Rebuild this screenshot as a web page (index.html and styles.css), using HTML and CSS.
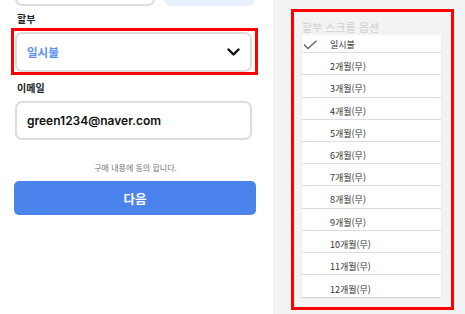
FILE: index.html
```html
<!DOCTYPE html>
<html lang="ko">
<head>
  <meta charset="UTF-8">
  <title>할부 선택</title>
  <link rel="stylesheet" href="styles.css">
</head>
<body>
  <div class="page">
    <section class="form">
      <div class="top-row">
        <div class="field-stub"></div>
        <div class="chip-stub"></div>
      </div>

      <div class="label">할부</div>
      <div class="highlight select-mark">
        <div class="select">
          <span class="select-value">일시불</span>
          <svg class="chevron" width="13" height="8" viewBox="0 0 13 8">
            <polyline points="1.5,1.5 6.5,6.5 11.5,1.5" fill="none" stroke="#111" stroke-width="2.4" stroke-linecap="round" stroke-linejoin="round"/>
          </svg>
        </div>
      </div>

      <div class="label">이메일</div>
      <div class="input">green1234@naver.com</div>

      <p class="agree">구매 내용에 동의 합니다.</p>
      <button class="next">다음</button>
    </section>

    <aside class="side">
      <div class="highlight picker-box">
        <div class="picker-title">할부 스크롤 옵션</div>
        <ul class="picker">
          <li class="selected">
            <span class="check">
              <svg width="15" height="10" viewBox="0 0 15 10">
                <polyline points="1,4.5 5,8.5 13.5,0.8" fill="none" stroke="#666" stroke-width="1.4"/>
              </svg>
            </span>일시불
          </li>
          <li><span class="check"></span>2개월(무)</li>
          <li><span class="check"></span>3개월(무)</li>
          <li><span class="check"></span>4개월(무)</li>
          <li><span class="check"></span>5개월(무)</li>
          <li><span class="check"></span>6개월(무)</li>
          <li><span class="check"></span>7개월(무)</li>
          <li><span class="check"></span>8개월(무)</li>
          <li><span class="check"></span>9개월(무)</li>
          <li><span class="check"></span>10개월(무)</li>
          <li><span class="check"></span>11개월(무)</li>
          <li><span class="check"></span>12개월(무)</li>
        </ul>
      </div>
    </aside>
  </div>
</body>
</html>
```

FILE: styles.css
```css
* {
  box-sizing: border-box;
}

body {
  margin: 0;
  font-family: 'Inter', 'Noto Sans CJK KR', sans-serif;
  background-color: #ffffff;
  overflow: hidden;
}

.page {
  display: flex;
  width: 465px;
  height: 314px;
}

/* left form column */
.form {
  width: 273px;
  padding-left: 15px;
  background-color: #ffffff;
}

.top-row {
  display: flex;
  gap: 9px;
  height: 40px;
  margin-top: -34px;
}

.field-stub {
  width: 140px;
  border: 2px solid #dddddd;
  border-radius: 7px;
}

.chip-stub {
  width: 91px;
  background-color: #e9f0fd;
  border-radius: 7px;
}

.label {
  margin: 6px 0 2px 2px;
  font-family: 'Noto Sans CJK KR', sans-serif;
  font-size: 10px;
  font-weight: 700;
  line-height: 14px;
  color: #222222;
}

.highlight {
  border: 3px solid #ff0000;
}

.select-mark {
  width: 247px;
  margin-left: -4px;
  padding: 1px 0 0 1px;
}

.select {
  display: flex;
  align-items: center;
  justify-content: space-between;
  width: 237px;
  height: 40px;
  padding: 0 10px 0 10px;
  border: 2px solid #dddddd;
  border-radius: 7px;
}

.select-value {
  font-family: 'Noto Sans CJK KR', sans-serif;
  font-size: 11.5px;
  font-weight: 700;
  color: #5a8ef0;
}

.input {
  display: flex;
  align-items: center;
  width: 237px;
  height: 39px;
  margin-top: 6px;
  padding-left: 10px;
  border: 2px solid #dddddd;
  border-radius: 7px;
  font-size: 12px;
  font-weight: 600;
  color: #111111;
}

.agree {
  margin: 22px 0 7px;
  width: 241px;
  text-align: center;
  font-family: 'Noto Sans CJK KR', sans-serif;
  font-size: 8px;
  line-height: 12px;
  color: #777777;
}

.next {
  display: block;
  width: 242px;
  height: 34px;
  margin-left: -1px;
  border: none;
  border-radius: 5px;
  background-color: #4a83eb;
  color: #ffffff;
  font-family: 'Noto Sans CJK KR', sans-serif;
  font-size: 12.5px;
  font-weight: 700;
}

/* right scroll picker */
.side {
  flex: 1;
  padding: 9px 11px 0 18px;
  background-color: #f3f3f3;
}

.picker-box {
  padding: 0 10px 10px 8px;
}

.picker-title {
  padding-top: 7px;
  font-family: 'Noto Sans CJK KR', sans-serif;
  font-size: 11px;
  line-height: 16px;
  color: #d0d0d0;
}

.picker {
  list-style: none;
  margin: 0;
  padding: 0;
  background-color: #ffffff;
  box-shadow: 0 1px 1px rgba(0, 0, 0, 0.12);
}

.picker li {
  display: flex;
  align-items: center;
  height: 22.2px;
  padding-top: 6px;
  border-bottom: 1px solid #dcdde3;
  font-family: 'Noto Sans CJK KR', sans-serif;
  font-size: 9px;
  line-height: 13px;
  color: #333333;
}

.picker li:first-child {
  height: 18.2px;
  padding-top: 2px;
}

.picker li:last-child {
  border-bottom: none;
}

.check {
  display: flex;
  width: 28px;
  padding-left: 1px;
}
```
